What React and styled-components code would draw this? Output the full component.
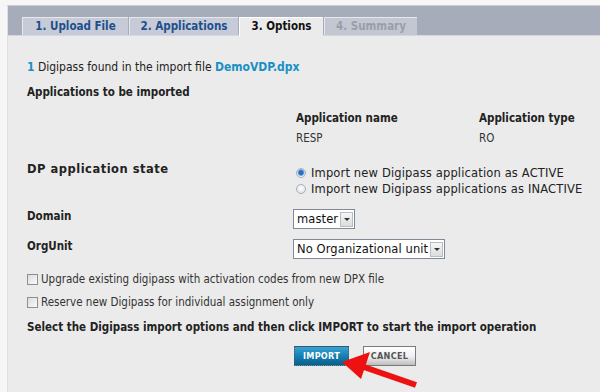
import React from 'react';
import styled, { createGlobalStyle } from 'styled-components';

const GlobalStyle = createGlobalStyle`
  html, body {
    margin: 0;
    padding: 0;
    background: #f6f6f6;
  }
  body {
    font-family: 'DejaVu Sans Condensed', 'DejaVu Sans', sans-serif;
    font-size: 11.5px;
    color: #222;
  }
`;

const tabs = [
  { label: '1. Upload File', width: 106, state: 'done' },
  { label: '2. Applications', width: 109, state: 'done' },
  { label: '3. Options', width: 84, state: 'active' },
  { label: '4. Summary', width: 93, state: 'disabled' },
];

const App = () => {
  return (
    <Page>
      <GlobalStyle />
      <Frame>
        <TabBar>
          {tabs.map((t) => (
            <Tab key={t.label} state={t.state} style={{ width: t.width }}>
              {t.label}
            </Tab>
          ))}
        </TabBar>
        <Content>
          <Found>
            <Link>1</Link> Digipass found in the import file <Link>DemoVDP.dpx</Link>
          </Found>
          <Heading>Applications to be imported</Heading>
          <AppTable>
            <ColHead>Application name</ColHead>
            <ColHead>Application type</ColHead>
            <Cell>RESP</Cell>
            <Cell>RO</Cell>
          </AppTable>

          <FormRow top={17}>
            <Label wide>DP application state</Label>
            <Options>
              <Option>
                <Radio checked />
                Import new Digipass application as ACTIVE
              </Option>
              <Option>
                <Radio />
                Import new Digipass applications as INACTIVE
              </Option>
            </Options>
          </FormRow>

          <FormRow top={13}>
            <Label>Domain</Label>
            <Select>
              <SelectText>master</SelectText>
              <SelectArrow />
            </Select>
          </FormRow>

          <FormRow top={10}>
            <Label>OrgUnit</Label>
            <Select>
              <SelectText>No Organizational unit</SelectText>
              <SelectArrow />
            </Select>
          </FormRow>

          <Check top={13}>
            <Box />
            Upgrade existing digipass with activation codes from new DPX file
          </Check>
          <Check top={9}>
            <Box />
            Reserve new Digipass for individual assignment only
          </Check>

          <Instruction>
            Select the Digipass import options and then click IMPORT to start the import operation
          </Instruction>

          <Buttons>
            <ImportButton>IMPORT</ImportButton>
            <CancelButton>CANCEL</CancelButton>
            <Arrow width="90" height="45" viewBox="0 0 90 45">
              <line x1="82" y1="39" x2="27" y2="20" stroke="#ee1111" strokeWidth="6" />
              <polygon points="8,16 36,6 27,33" fill="#ee1111" />
            </Arrow>
          </Buttons>
        </Content>
      </Frame>
    </Page>
  );
};

export default App;

const Page = styled.div`
  width: 600px;
  height: 392px;
  overflow: hidden;
  padding: 5px 0 0 7px;
  box-sizing: border-box;
`;

const Frame = styled.div`
  height: 100%;
  background: #ebebeb;
  border-left: 1px solid #e0e0e0;
  border-top: 1px solid #c9ccd4;
`;

const TabBar = styled.div`
  height: 29px;
  background: #a7acba;
  display: flex;
  align-items: flex-end;
  gap: 1px;
  padding-left: 14px;
  border-bottom: 1px solid #d4d7de;
`;

const Tab = styled.div`
  box-sizing: border-box;
  border-top: 1px solid ${(p) => (p.state === 'active' ? '#ffffff' : '#e6e8ee')};
  border-left: 1px solid ${(p) => (p.state === 'active' ? '#ffffff' : '#e6e8ee')};
  background: ${(p) => (p.state === 'active' ? '#ebebeb' : p.state === 'disabled' ? '#c3c7d1' : '#c6cbd7')};
  color: ${(p) => (p.state === 'active' ? '#111' : p.state === 'disabled' ? '#9a9ea8' : '#1d4f8c')};
  font-weight: bold;
  font-size: 11.5px;
  line-height: 17px;
  text-align: center;
  margin-bottom: ${(p) => (p.state === 'active' ? '-1px' : '0')};
  height: ${(p) => (p.state === 'active' ? '19px' : '18px')};
`;

const Content = styled.div`
  padding: 24px 0 0 19px;
`;

const Found = styled.div`
  font-size: 12px;
  line-height: 14px;
`;

const Link = styled.span`
  color: #1a8fc4;
  font-weight: bold;
`;

const Heading = styled.div`
  font-weight: bold;
  line-height: 14px;
  margin-top: 11px;
`;

const AppTable = styled.div`
  display: grid;
  grid-template-columns: 183px auto;
  margin: 12px 0 0 269px;
  row-gap: 6px;
  line-height: 14px;
`;

const ColHead = styled.div`
  font-weight: bold;
`;

const Cell = styled.div`
  color: #333;
`;

const FormRow = styled.div`
  display: flex;
  align-items: flex-start;
  margin-top: ${(p) => p.top}px;
`;

const Label = styled.div`
  width: 266px;
  font-weight: bold;
  line-height: 14px;
  flex-shrink: 0;
  font-family: ${(p) => (p.wide ? "'DejaVu Sans', sans-serif" : 'inherit')};
  letter-spacing: ${(p) => (p.wide ? '0.5px' : 'normal')};
`;

const Options = styled.div`
  display: flex;
  flex-direction: column;
  gap: 2px;
  padding-top: 4px;
`;

const Option = styled.div`
  display: flex;
  align-items: center;
  gap: 5px;
  line-height: 14px;
  padding-left: 3px;
  white-space: nowrap;
  font-family: 'DejaVu Sans', sans-serif;
  font-size: 11.5px;
  letter-spacing: 0.15px;
  color: #222;
`;

const Radio = styled.span`
  width: 10px;
  height: 10px;
  flex-shrink: 0;
  border-radius: 50%;
  box-sizing: border-box;
  border: 1px solid #a9b0ba;
  background: ${(p) =>
    p.checked
      ? 'radial-gradient(circle at 50% 45%, #2a6fc0 0 2px, #7fb0e0 3px, #eef3f8 4px)'
      : 'radial-gradient(circle at 50% 40%, #ffffff, #d6dae0)'};
`;

const Select = styled.div`
  display: inline-flex;
  align-items: center;
  height: 20px;
  box-sizing: border-box;
  border: 1px solid #7f8a96;
  background: #fff;
  padding: 1px;
`;

const SelectText = styled.span`
  padding: 0 2px;
  font-family: 'DejaVu Sans', sans-serif;
  font-size: 11.5px;
  letter-spacing: 0.1px;
  color: #111;
`;

const SelectArrow = styled.span`
  width: 13px;
  height: 15px;
  box-sizing: border-box;
  border: 1px solid #b8bcc4;
  background: linear-gradient(#f6f6f6, #dcdcdc);
  position: relative;
  &::after {
    content: '';
    position: absolute;
    left: 3px;
    top: 5px;
    border-left: 3px solid transparent;
    border-right: 3px solid transparent;
    border-top: 3px solid #333;
  }
`;

const Check = styled.div`
  display: flex;
  align-items: center;
  gap: 3px;
  margin-top: ${(p) => p.top}px;
  line-height: 14px;
  color: #333;
`;

const Box = styled.span`
  width: 11px;
  height: 11px;
  box-sizing: border-box;
  border: 1px solid #8f8f8f;
  background: linear-gradient(135deg, #dcdcdc, #fbfbfb);
`;

const Instruction = styled.div`
  font-weight: bold;
  line-height: 14px;
  margin-top: 11px;
`;

const Buttons = styled.div`
  position: relative;
  display: flex;
  gap: 14px;
  margin: 12px 0 0 267px;
`;

const BaseButton = styled.button`
  height: 20px;
  padding: 0;
  font-family: 'DejaVu Sans Condensed', 'Liberation Sans Narrow', sans-serif;
  font-weight: bold;
  font-size: 9px;
  letter-spacing: 0.3px;
  cursor: pointer;
`;

const ImportButton = styled(BaseButton)`
  width: 55px;
  color: #fff;
  border: 1px dotted #555;
  background: linear-gradient(#3aa3d3, #1580b4 50%, #0b5f88);
`;

const CancelButton = styled(BaseButton)`
  width: 53px;
  color: #555;
  border: 1px solid #7a7a7a;
  background: linear-gradient(#ffffff, #eeeeee 55%, #bdbdbd);
`;

const Arrow = styled.svg`
  position: absolute;
  left: 40px;
  top: 0;
`;
